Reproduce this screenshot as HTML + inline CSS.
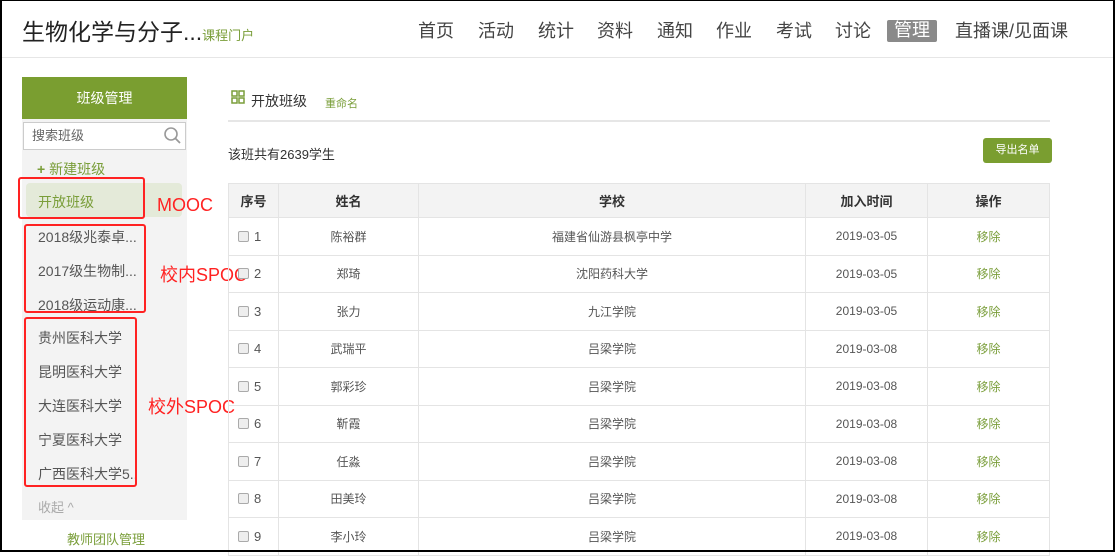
<!DOCTYPE html>
<html><head><meta charset="utf-8"><style>
*{margin:0;padding:0;box-sizing:border-box}
body{width:1115px;height:552px;overflow:hidden;background:#fff;font-family:"Liberation Sans","Noto Sans CJK SC",sans-serif;position:relative;color:#333}
.frame{position:absolute;left:0;top:0;width:1115px;height:552px;border:2px solid #000;border-top-width:1px;z-index:20;pointer-events:none}
.a{position:absolute;white-space:nowrap}
.nav{top:17px;font-size:18px;color:#444}
.red{position:absolute;border:2px solid #f22;border-radius:3px;z-index:5}
.rl{position:absolute;color:#f22;font-size:18px;white-space:nowrap}
.item{position:absolute;left:38px;font-size:14px;color:#555}
table{position:absolute;left:228px;top:183px;width:822px;border-collapse:collapse;font-size:12px;color:#555}
td,th{border:1px solid #e4e4e4;text-align:center;height:37.5px}
th{background:#f3f3f3;height:34px;font-weight:bold;color:#333;font-size:13px}
td:first-child{text-align:left;padding-left:9px;font-size:13px}
.cb{display:inline-block;width:11px;height:11px;border:1px solid #aaa;border-radius:2px;background:#eee;vertical-align:-1px;margin-right:5px}
.g{color:#7a9e3a}
</style></head><body>
<div class="frame"></div>
<div class="a" style="left:22px;top:13px;font-size:23px;color:#222">生物化学与分子...<span style="font-size:13px;color:#7a9e3a">课程门户</span></div>
<div class="a nav" style="left:418px">首页</div>
<div class="a nav" style="left:478px">活动</div>
<div class="a nav" style="left:538px">统计</div>
<div class="a nav" style="left:597px">资料</div>
<div class="a nav" style="left:657px">通知</div>
<div class="a nav" style="left:716px">作业</div>
<div class="a nav" style="left:776px">考试</div>
<div class="a nav" style="left:835px">讨论</div>
<div class="a nav" style="left:887px;top:20px;width:50px;height:22px;background:#8a8a8a;color:#fff;text-align:center;line-height:21px;border-radius:2px">管理</div>
<div class="a nav" style="left:955px">直播课/见面课</div>
<div class="a" style="left:2px;top:57px;width:1111px;height:1px;background:#e6e6e6"></div>

<div class="a" style="left:22px;top:77px;width:165px;height:42px;background:#7a9e30;color:#fff;font-size:14px;text-align:center;line-height:42px">班级管理</div>
<div class="a" style="left:22px;top:119px;width:165px;height:401px;background:#f3f3f3"></div>
<div class="a" style="left:23px;top:122px;width:163px;height:28px;background:#fff;border:1px solid #ccc;font-size:13px;color:#666;line-height:26px;padding-left:8px">搜索班级</div>
<svg class="a" style="left:163px;top:126px" width="20" height="20"><circle cx="8" cy="8" r="6" fill="none" stroke="#999" stroke-width="1.6"/><line x1="12.5" y1="12.5" x2="17" y2="17" stroke="#999" stroke-width="1.8"/></svg>
<div class="a" style="left:37px;top:159px;font-size:14px;color:#7a9e3a"><b>+</b> 新建班级</div>
<div class="a" style="left:26px;top:183px;width:156px;height:34px;background:#e4ead9;border-radius:4px"></div>
<div class="item" style="top:192px;color:#7a9e3a">开放班级</div>
<div class="item" style="top:227px">2018级兆泰卓...</div>
<div class="item" style="top:261px">2017级生物制...</div>
<div class="item" style="top:295px">2018级运动康...</div>
<div class="item" style="top:328px">贵州医科大学</div>
<div class="item" style="top:362px">昆明医科大学</div>
<div class="item" style="top:396px">大连医科大学</div>
<div class="item" style="top:430px">宁夏医科大学</div>
<div class="item" style="top:464px">广西医科大学5..</div>
<div class="item" style="top:497px;color:#aaa;font-size:13px">收起 ^</div>
<div class="a" style="left:67px;top:529px;font-size:13px;color:#7a9e3a">教师团队管理</div>
<div class="red" style="left:18px;top:177px;width:127px;height:42px"></div>
<div class="red" style="left:24px;top:224px;width:122px;height:89px"></div>
<div class="red" style="left:24px;top:317px;width:113px;height:170px"></div>
<div class="rl" style="left:157px;top:195px">MOOC</div>
<div class="rl" style="left:160px;top:261px">校内SPOC</div>
<div class="rl" style="left:148px;top:393px">校外SPOC</div>

<svg class="a" style="left:231px;top:90px" width="14" height="14"><g fill="none" stroke="#7a9e3a" stroke-width="1.5"><rect x="1" y="1" width="5" height="5"/><rect x="8" y="1" width="5" height="5"/><rect x="1" y="8" width="5" height="5"/><rect x="8" y="8" width="5" height="5"/></g></svg>
<div class="a" style="left:251px;top:91px;font-size:14px;color:#333">开放班级</div>
<div class="a" style="left:325px;top:95px;font-size:11px;color:#7a9e3a">重命名</div>
<div class="a" style="left:228px;top:120px;width:822px;height:2px;background:#e6e6e6"></div>
<div class="a" style="left:228px;top:144px;font-size:13px;color:#333">该班共有2639学生</div>
<div class="a" style="left:983px;top:138px;width:69px;height:25px;background:#7a9e30;color:#fff;font-size:11px;text-align:center;line-height:25px;border-radius:3px">导出名单</div>

<table>
<tr><th style="width:50px">序号</th><th style="width:140px">姓名</th><th style="width:387px">学校</th><th style="width:122px">加入时间</th><th>操作</th></tr>
<tr><td><span class="cb"></span>1</td><td>陈裕群</td><td>福建省仙游县枫亭中学</td><td>2019-03-05</td><td class="g">移除</td></tr>
<tr><td><span class="cb"></span>2</td><td>郑琦</td><td>沈阳药科大学</td><td>2019-03-05</td><td class="g">移除</td></tr>
<tr><td><span class="cb"></span>3</td><td>张力</td><td>九江学院</td><td>2019-03-05</td><td class="g">移除</td></tr>
<tr><td><span class="cb"></span>4</td><td>武瑞平</td><td>吕梁学院</td><td>2019-03-08</td><td class="g">移除</td></tr>
<tr><td><span class="cb"></span>5</td><td>郭彩珍</td><td>吕梁学院</td><td>2019-03-08</td><td class="g">移除</td></tr>
<tr><td><span class="cb"></span>6</td><td>靳霞</td><td>吕梁学院</td><td>2019-03-08</td><td class="g">移除</td></tr>
<tr><td><span class="cb"></span>7</td><td>任淼</td><td>吕梁学院</td><td>2019-03-08</td><td class="g">移除</td></tr>
<tr><td><span class="cb"></span>8</td><td>田美玲</td><td>吕梁学院</td><td>2019-03-08</td><td class="g">移除</td></tr>
<tr><td><span class="cb"></span>9</td><td>李小玲</td><td>吕梁学院</td><td>2019-03-08</td><td class="g">移除</td></tr>
</table>
</body></html>
